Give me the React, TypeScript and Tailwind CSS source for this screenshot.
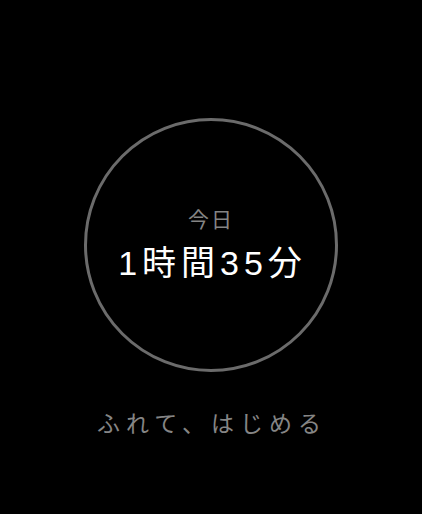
export default function App() {
  const font = { fontFamily: '"Liberation Sans", "Noto Sans CJK JP", sans-serif' };
  return (
    <div className="w-[422px] h-[514px] bg-black flex flex-col items-center font-normal" style={font}>
      <div className="mt-[118px] w-[254px] h-[254px] rounded-full border-[3px] border-[#6b6b6b] flex flex-col items-center justify-center">
        <div className="text-[21px] leading-none text-[#858585] tracking-[2px] mt-[-2px]">今日</div>
        <div className="text-[34px] leading-none text-white tracking-[5px] mt-[16px] pl-[3px]">1時間35分</div>
      </div>
      <div className="mt-[41px] text-[23px] leading-none text-[#858585] tracking-[6px] pl-[2px]">ふれて、はじめる</div>
    </div>
  );
}
